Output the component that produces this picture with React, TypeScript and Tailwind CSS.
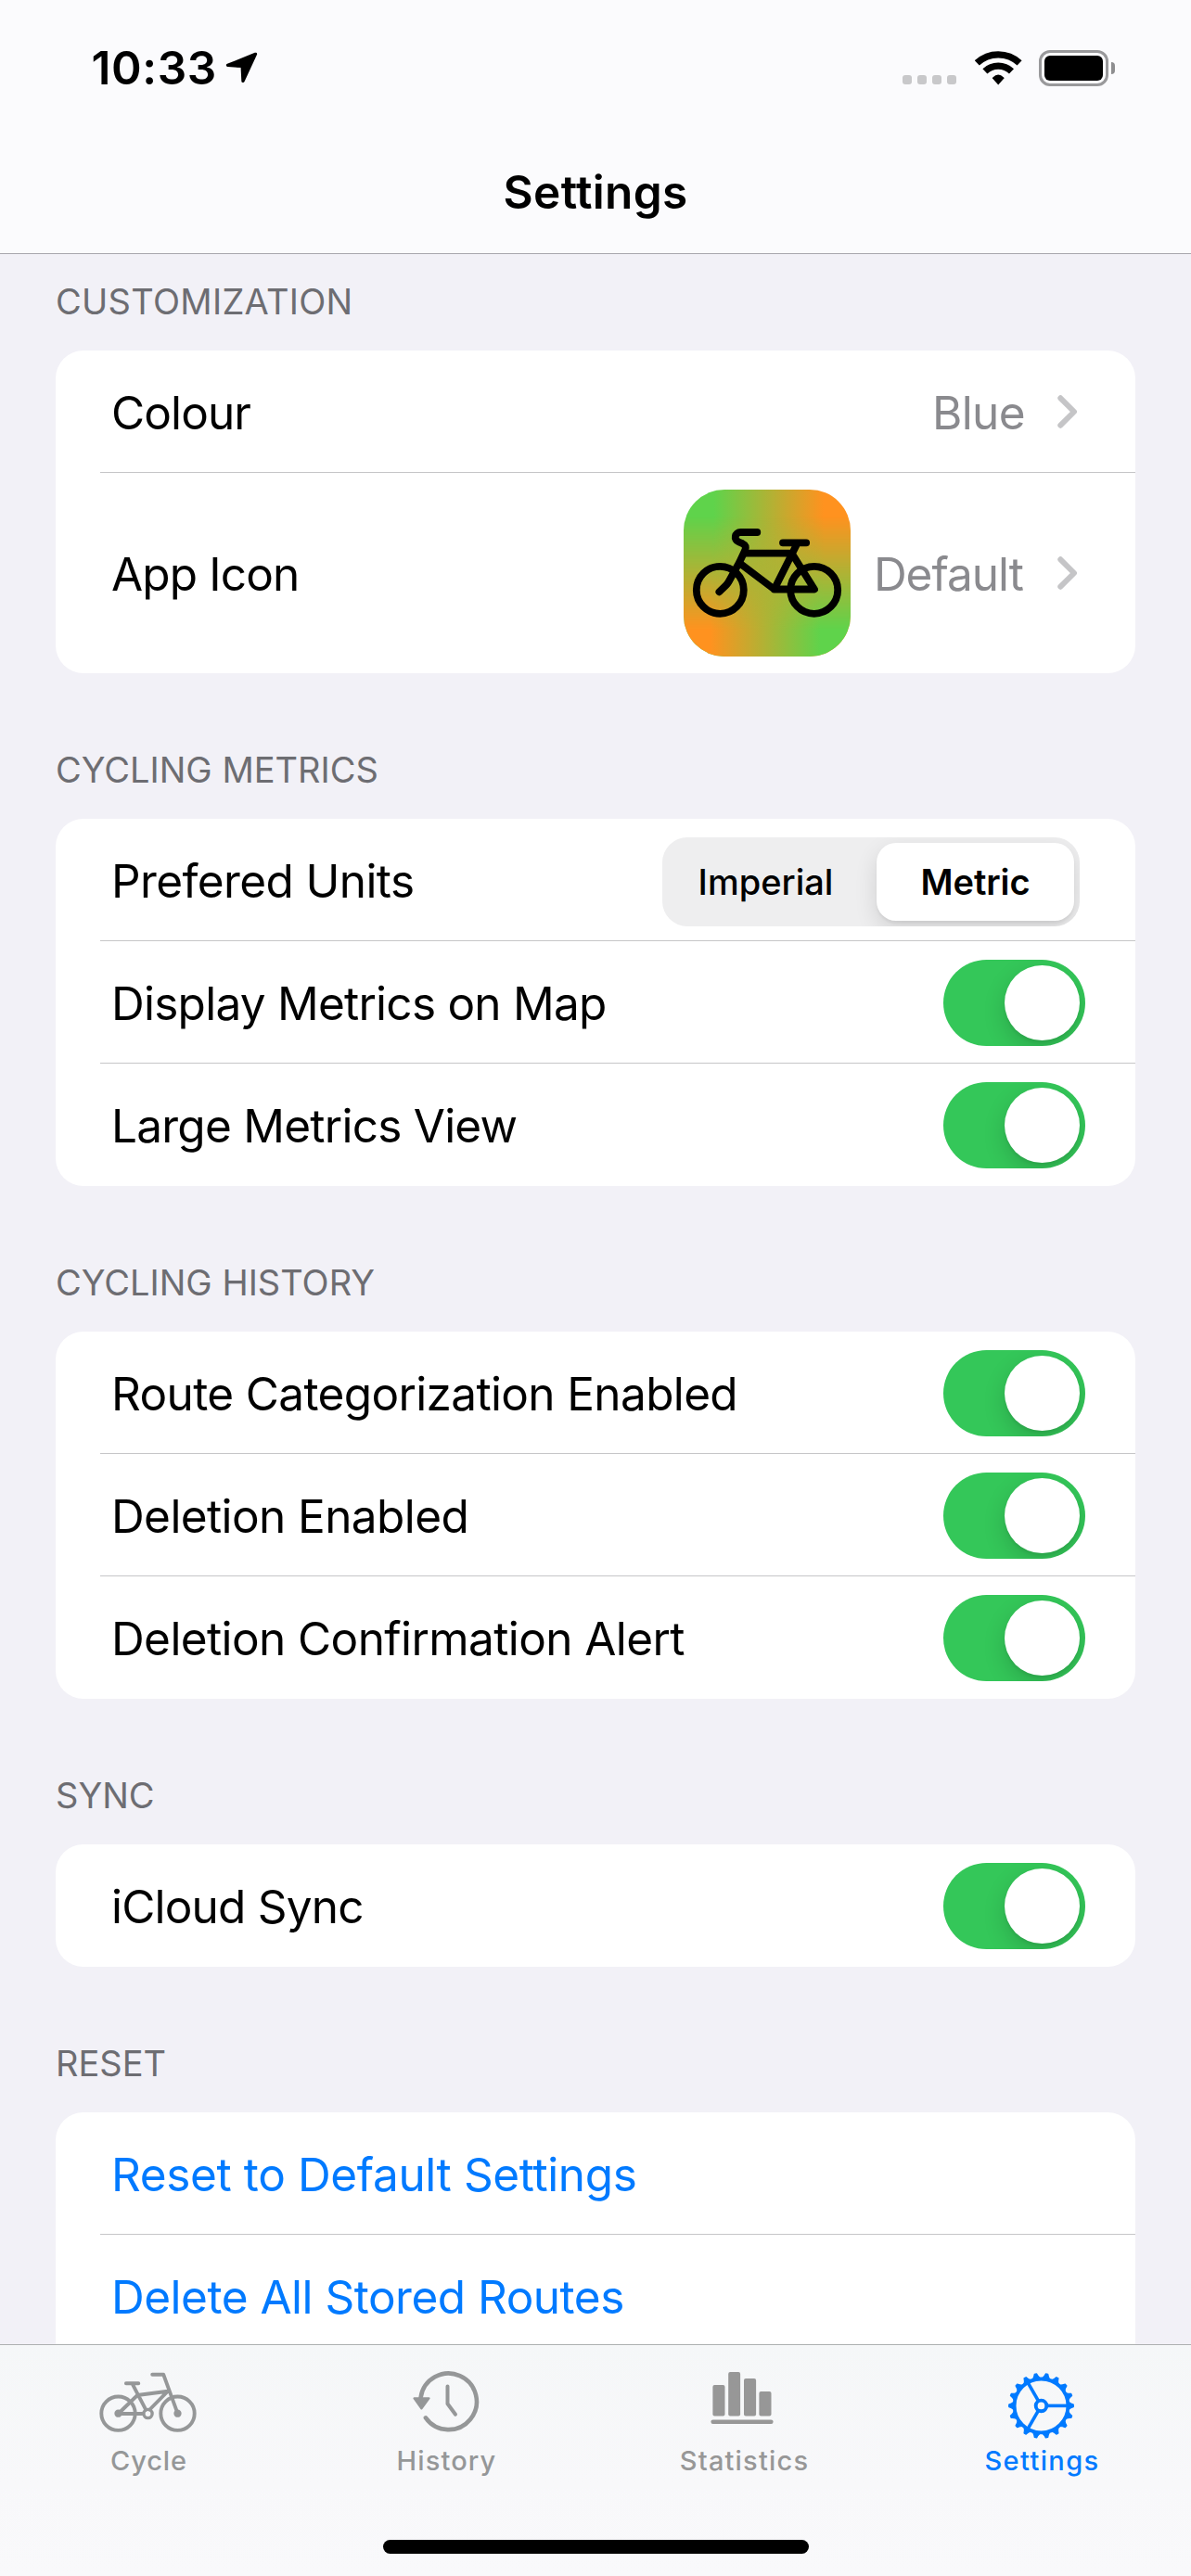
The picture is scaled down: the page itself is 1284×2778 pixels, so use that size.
import React from "react";

const tabPath = "fill-none stroke-current";

function LocationArrow() {
  return (
    <svg className="h-[34px] w-[35px]" viewBox="0 0 35 34">
      <path d="M32.4 2.4 2.6 14.4 18.2 15.4 19 31.3Z" fill="black" stroke="black" strokeWidth="3.4" strokeLinejoin="round" />
    </svg>
  );
}

function Wifi() {
  return (
    <svg className="h-[37px] w-[51px]" viewBox="0 0 51 37">
      <path d="M2.3 12.9A33.3 33.3 0 0 1 48.1 12.9M10.9 21.9A20.8 20.8 0 0 1 39.5 21.9" fill="none" stroke="black" strokeWidth="7.3" />
      <path d="M25.2 36.6 19 29.6Q18.7 29 19.3 28.4 25.2 22.6 31.1 28.4 31.7 29 31.4 29.6Z" />
    </svg>
  );
}

function Battery() {
  return (
    <div className="flex items-center gap-[3px]">
      <div className="h-[39px] w-[75px] rounded-[12px] border-[3px] border-[#99999b] p-[3px]">
        <div className="h-full rounded-[6px] bg-black" />
      </div>
      <div className="h-[13px] w-[4px] rounded-r-full bg-[#8e8e90]" />
    </div>
  );
}

function Chevron() {
  return (
    <svg className="mr-[62px] h-[36px] w-[22px]" viewBox="0 0 22 36">
      <path d="M3.3 3.3 18 18 3.3 32.7" fill="none" stroke="#c5c5c7" strokeWidth="6" strokeLinecap="round" strokeLinejoin="round" />
    </svg>
  );
}

function AppIcon() {
  return (
    <div className="relative h-[180px] w-[180px] overflow-hidden rounded-[44px] bg-[linear-gradient(to_right,#5fd34b_18%,#ff921f_84%)]">
      <div className="absolute inset-0 bg-[linear-gradient(to_right,#ff921f_16%,#5fd34b_82%)] [mask-image:linear-gradient(to_bottom,transparent_16%,black_84%)]" />
      <svg className="relative h-full w-full" viewBox="0 0 180 180" fill="none" stroke="black" strokeWidth="7.8" strokeLinecap="round" strokeLinejoin="round">
        <circle cx="39.3" cy="108.3" r="25.5" />
        <circle cx="140.7" cy="108.3" r="25.5" />
        <path d="M79.3 46H61.5C55 46 53.5 54 59.5 56.5L63.5 58.2C67 59.8 67.5 62.5 66 66L60 78.7 48.5 99.5Q47.3 101.6 45.5 103.3L38.4 110.3" />
        <path d="M66 68.7H116.7L141 107.5H97.7L121.5 60M60.5 79.3 97.7 107.5M107 57.3H132.2" />
      </svg>
    </div>
  );
}

function Toggle() {
  return (
    <div className="mt-px mr-[54px] flex h-[93px] w-[153px] justify-end overflow-hidden rounded-full bg-[#34c759] p-[6px]">
      <div className="h-[81px] w-[81px] rounded-full bg-white shadow-[0_9px_24px_rgba(0,0,0,0.16),0_3px_3px_rgba(0,0,0,0.06)]" />
    </div>
  );
}

function Segmented() {
  return (
    <div className="mt-[4px] mr-[60px] flex h-[96px] w-[450px] overflow-hidden rounded-[27px] bg-[#eeeeef] p-[6px] text-[38px]">
      <div className="flex flex-1 items-center justify-center pr-[14px] font-medium">Imperial</div>
      <div className="flex w-[213px] items-center justify-center rounded-[21px] bg-white font-semibold tracking-[-0.1px] shadow-[0_9px_24px_rgba(0,0,0,0.12),0_3px_3px_rgba(0,0,0,0.05)]">
        Metric
      </div>
    </div>
  );
}

type RowProps = { label: string; tone?: string; size?: string; line?: boolean; children?: React.ReactNode };

function Row({ label, tone = "tracking-[-0.6px]", size = "h-[132px]", line = true, children }: RowProps) {
  return (
    <div className={`ml-[48px] flex items-center justify-between pl-[12px] ${size} ${line ? "shadow-[inset_0_-1px_0_#c6c6c8]" : ""}`}>
      <span className={`pt-[2px] ${tone}`}>{label}</span>
      <div className="flex items-center">{children}</div>
    </div>
  );
}

function Section({ title, tone = "", children }: { title: string; tone?: string; children: React.ReactNode }) {
  return (
    <section className="px-[60px]">
      <h2 className={`flex h-[104px] items-end pb-[30px] text-[38px] leading-[46px] text-[#6d6d72] ${tone}`}>{title}</h2>
      <div className="overflow-hidden rounded-[30px] bg-white">{children}</div>
    </section>
  );
}

function CycleIcon() {
  return (
    <svg className={`h-[80px] w-[120px] ${tabPath}`} viewBox="0 0 120 80" strokeWidth="3.9" strokeLinecap="round" strokeLinejoin="round">
      <circle cx="27.5" cy="51.7" r="18.2" />
      <circle cx="91.5" cy="51.7" r="18.2" />
      <circle cx="59.5" cy="52" r="4.6" strokeWidth="3.4" />
      <circle cx="27.5" cy="51.7" r="2.2" />
      <circle cx="91.5" cy="51.7" r="2.2" />
      <path d="M53.5 52H27.5L48.2 32 81 27.7 61.4 47.5M42.6 19.7 57.2 47.7M35.9 19.3H49.3M91.5 51.7 76.2 9.7H64.2" />
    </svg>
  );
}

function HistoryIcon() {
  return (
    <svg className={`h-[80px] w-[120px] ${tabPath}`} viewBox="0 0 120 80" strokeLinecap="round" strokeLinejoin="round">
      <path d="M32.6 34.5A30.3 30.3 0 1 1 37.9 56.4" strokeWidth="4.6" />
      <path d="M61.5 22.5V41.3L70 52.7" strokeWidth="4" />
      <path d="M25.6 35.4H41.4L33.4 46.2Z" fill="currentColor" strokeWidth="2.4" />
    </svg>
  );
}

function StatisticsIcon() {
  return (
    <svg className="h-[80px] w-[120px] fill-current" viewBox="0 0 120 80">
      <rect x="26.4" y="21" width="13.1" height="33.5" rx="2" />
      <rect x="43.2" y="7" width="12.9" height="47.5" rx="2" />
      <rect x="60" y="14" width="13.1" height="40.5" rx="2" />
      <rect x="76.4" y="28" width="13.1" height="26.5" rx="2" />
      <rect x="24.4" y="58.6" width="67.2" height="4.4" rx="2.2" />
    </svg>
  );
}

const teeth = Array.from({ length: 18 }, (_, i) => i * 20);

function SettingsIcon() {
  return (
    <svg className={`h-[80px] w-[120px] ${tabPath}`} viewBox="0 0 120 80">
      <g transform="translate(59.5 43.4)">
        <circle r="28.9" strokeWidth="3.8" />
        <circle r="5.8" strokeWidth="3.9" />
        {teeth.map((a) => (
          <path key={a} transform={`rotate(${a})`} d="M29.5 -4.1Q32 -2 34.8 -1.2V1.2Q32 2 29.5 4.1Z" fill="currentColor" strokeWidth="1.2" strokeLinejoin="round" />
        ))}
        {[0, 120, 240].map((a) => (
          <path key={a} transform={`rotate(${a})`} d="M7 0H28" strokeWidth="3.6" />
        ))}
      </g>
    </svg>
  );
}

function Tab({ icon, label, tone }: { icon: React.ReactNode; label: string; tone: string }) {
  return (
    <div className={`flex flex-1 flex-col items-center pt-[22px] ${tone}`}>
      <div className="mr-[1.5px]">{icon}</div>
      <span className="mt-[5px] text-[29px] leading-[36px] font-medium">{label}</span>
    </div>
  );
}

export default function App() {
  return (
    <div className="flex h-[2778px] w-[1284px] flex-col overflow-hidden bg-[#f2f1f7] font-['Inter','Liberation_Sans',sans-serif] text-[49.5px] leading-[60px] text-black">
      <header className="h-[274px] shrink-0 border-b border-[#a8a7ad] bg-[#fbfbfd]">
        <div className="flex justify-between pt-[43px] pr-[82px] pl-[98.5px]">
          <div className="flex items-center">
            <span className="font-semibold tracking-[0.6px]">10:33</span>
            <div className="ml-[9.5px]">
              <LocationArrow />
            </div>
          </div>
          <div className="flex items-center">
            <div className="mt-[26px] mr-[19.5px] flex gap-[6px]">
              {[0, 1, 2, 3].map((i) => (
                <div key={i} className="h-[10px] w-[10px] rounded-[3px] bg-[#c8c8ca]" />
              ))}
            </div>
            <Wifi />
            <div className="ml-[18.5px]">
              <Battery />
            </div>
          </div>
        </div>
        <h1 className="pt-[74px] text-center font-semibold tracking-[0.33px]">Settings</h1>
      </header>

      <main className="flex min-h-0 flex-1 flex-col gap-[53px] overflow-hidden">
        <Section title="CUSTOMIZATION" tone="tracking-[0.29px]">
          <Row label="Colour" tone="tracking-[-0.9px]">
            <span className="mr-[35px] pt-[2px] tracking-[-0.6px] text-[#8a8a8e]">Blue</span>
            <Chevron />
          </Row>
          <Row label="App Icon" tone="tracking-[-0.85px]" size="h-[216px]" line={false}>
            <AppIcon />
            <span className="mr-[37px] ml-[25px] pt-[2px] tracking-[-1px] text-[#8a8a8e]">Default</span>
            <Chevron />
          </Row>
        </Section>

        <Section title="CYCLING METRICS">
          <Row label="Prefered Units">
            <Segmented />
          </Row>
          <Row label="Display Metrics on Map" tone="tracking-[-0.75px]">
            <Toggle />
          </Row>
          <Row label="Large Metrics View" tone="tracking-[-0.75px]" line={false}>
            <Toggle />
          </Row>
        </Section>

        <Section title="CYCLING HISTORY">
          <Row label="Route Categorization Enabled" tone="tracking-[-0.64px]">
            <Toggle />
          </Row>
          <Row label="Deletion Enabled">
            <Toggle />
          </Row>
          <Row label="Deletion Confirmation Alert" line={false}>
            <Toggle />
          </Row>
        </Section>

        <Section title="SYNC">
          <Row label="iCloud Sync" tone="tracking-[-0.8px]" line={false}>
            <Toggle />
          </Row>
        </Section>

        <Section title="RESET">
          <Row label="Reset to Default Settings" tone="tracking-[-0.38px] text-[#007aff]" />
          <Row label="Delete All Stored Routes" tone="tracking-[-0.5px] text-[#007aff]" />
          <div className="h-[132px]" />
        </Section>
      </main>

      <nav className="flex h-[250px] shrink-0 flex-col items-center border-t border-[#adb0b0] bg-[linear-gradient(to_bottom,#f5f7f8,#f8f8fa_60%,#f9f9fb)]">
        <div className="flex w-full">
          <Tab icon={<CycleIcon />} label="Cycle" tone="text-[#959798] tracking-[0.88px]" />
          <Tab icon={<HistoryIcon />} label="History" tone="text-[#959798] tracking-[1.12px]" />
          <Tab icon={<StatisticsIcon />} label="Statistics" tone="text-[#979797] tracking-[1.19px]" />
          <Tab icon={<SettingsIcon />} label="Settings" tone="text-[#007aff] tracking-[1.37px]" />
        </div>
        <div className="mt-[67px] h-[15px] w-[459px] rounded-full bg-black" />
      </nav>
    </div>
  );
}
